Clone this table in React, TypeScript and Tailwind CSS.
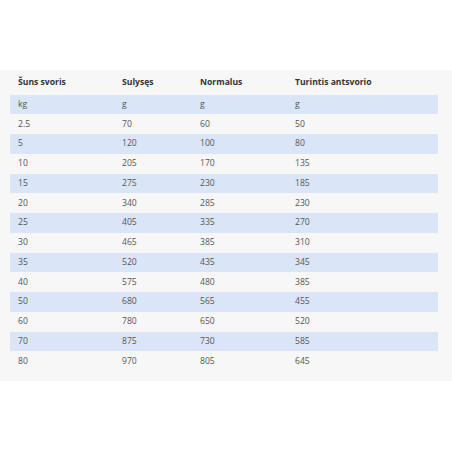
import React from "react";

const rows: string[][] = [
  ["kg", "g", "g", "g"],
  ["2.5", "70", "60", "50"],
  ["5", "120", "100", "80"],
  ["10", "205", "170", "135"],
  ["15", "275", "230", "185"],
  ["20", "340", "285", "230"],
  ["25", "405", "335", "270"],
  ["30", "465", "385", "310"],
  ["35", "520", "435", "345"],
  ["40", "575", "480", "385"],
  ["50", "680", "565", "455"],
  ["60", "780", "650", "520"],
  ["70", "875", "730", "585"],
  ["80", "970", "805", "645"],
];

const headers = ["Šuns svoris", "Sulysęs", "Normalus", "Turintis antsvorio"];

export default function App() {
  return (
    <div
      className="w-[452px] h-[452px] bg-white pt-[70px]"
      style={{ fontFamily: '"Open Sans", "Liberation Sans", sans-serif' }}
    >
      <div className="h-[311px] bg-[#f7f7f7] pl-[10px] pr-[14px]">
        <div className="grid grid-cols-[104px_78px_95px_151px] h-[24.5px] items-center pt-[1px] text-[8.6px] font-bold text-[#333]">
          {headers.map((h) => (
            <div key={h} className="pl-[8px]">
              {h}
            </div>
          ))}
        </div>
        {rows.map((r, i) => (
          <div
            key={i}
            className={`grid grid-cols-[104px_78px_95px_151px] h-[19.75px] items-center text-[8.6px] text-[#555] ${
              i % 2 === 0 ? "bg-[#dae6f8]" : ""
            }`}
          >
            {r.map((c, j) => (
              <div key={j} className="pl-[8px]">
                {c}
              </div>
            ))}
          </div>
        ))}
      </div>
    </div>
  );
}
